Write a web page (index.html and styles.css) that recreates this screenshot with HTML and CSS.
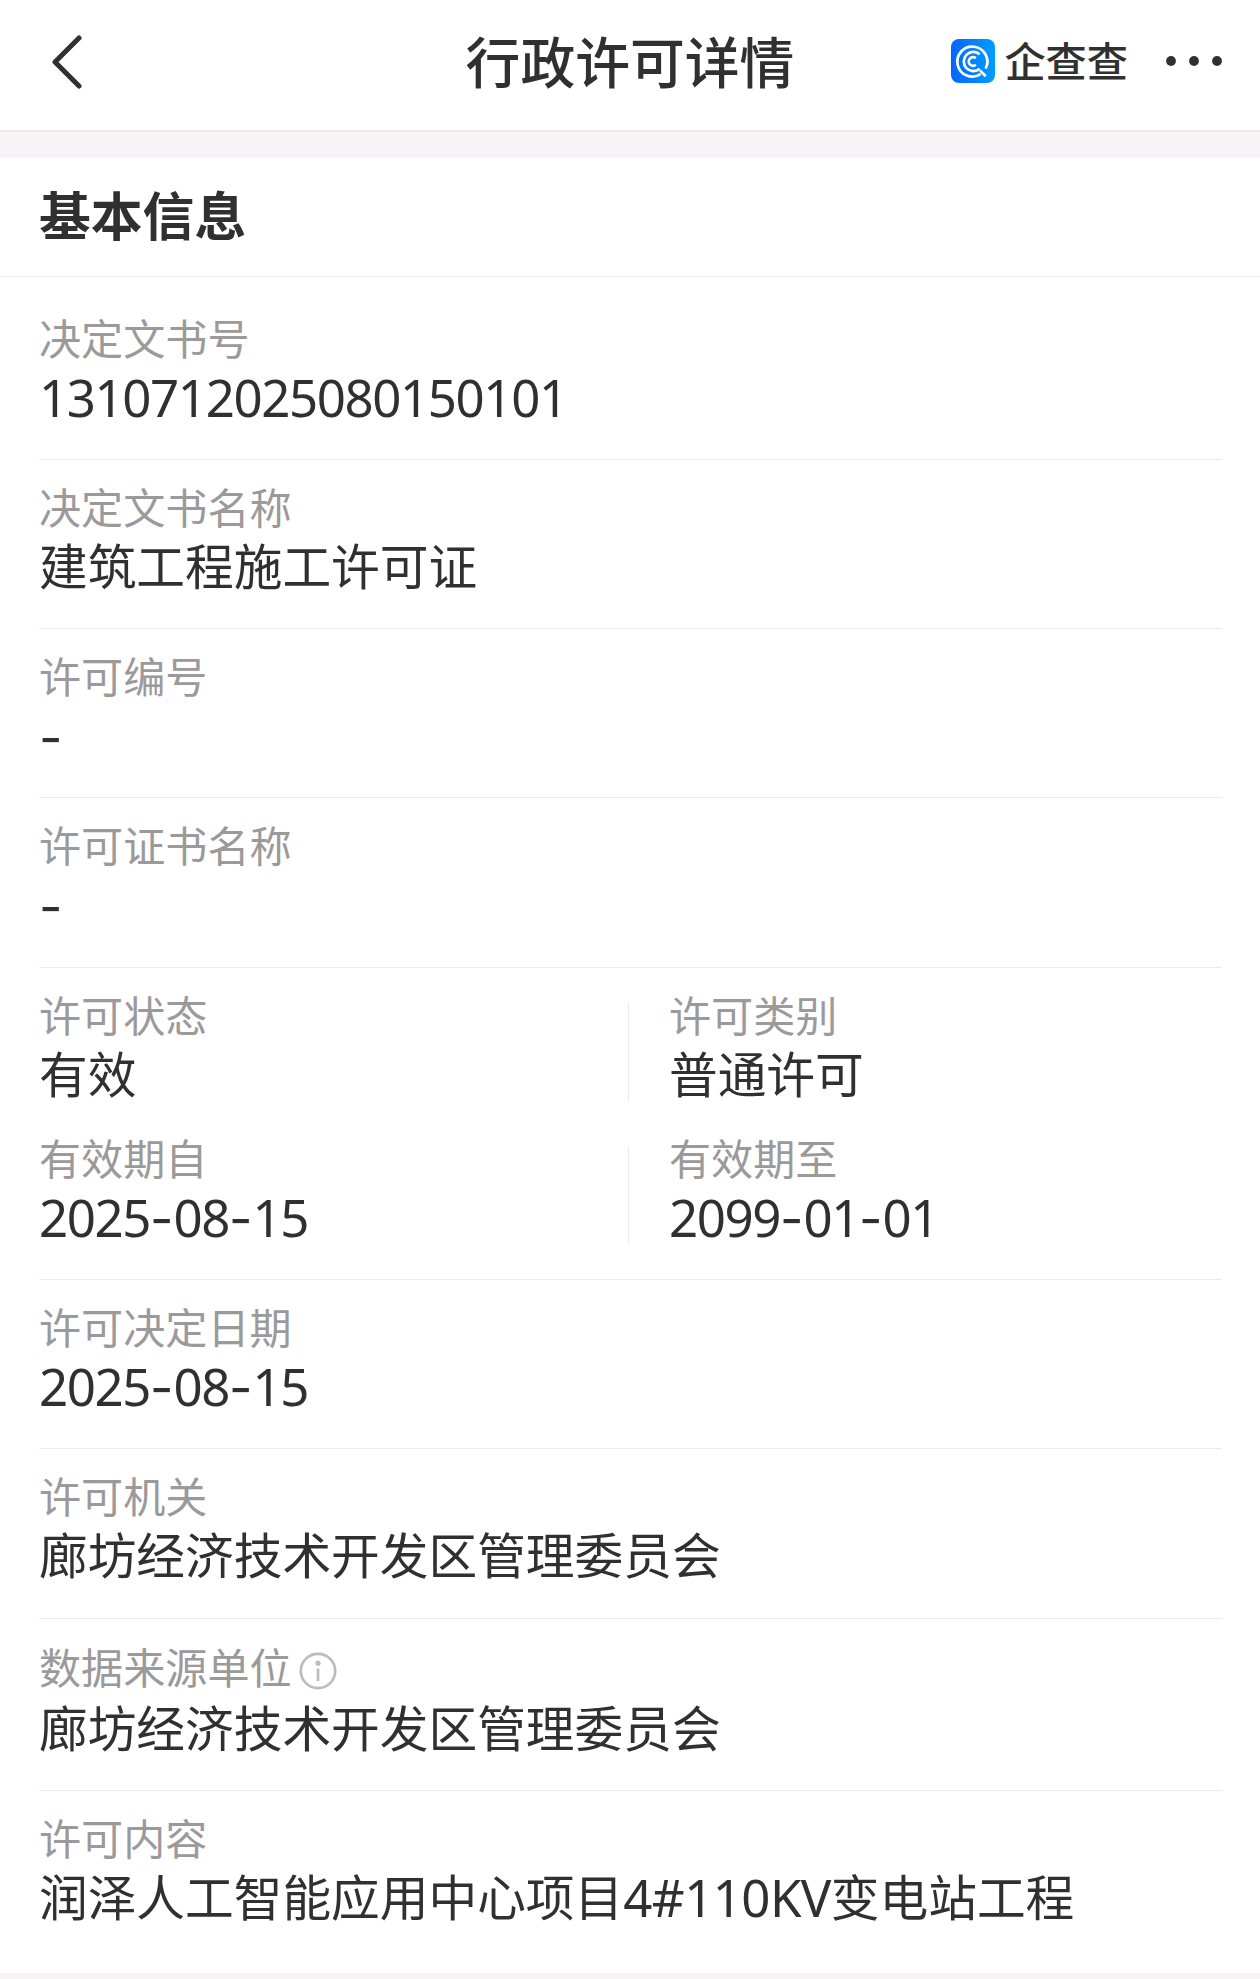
FILE: index.html
```html
<!DOCTYPE html>
<html lang="zh-CN">
  <head>
    <meta charset="utf-8">
    <title>行政许可详情</title>
    <link rel="stylesheet" href="styles.css">
  </head>

  <body>
    <header class="navbar">
      <svg class="back" width="36" height="60" viewBox="0 0 36 60">
        <path d="M33 7 L9 31 L33 55" />
      </svg>
      <h1>行政许可详情</h1>
      <div class="tools">
        <div class="brand">
          <svg class="logo" width="44" height="44" viewBox="0 0 44 44">
            <defs>
              <linearGradient id="blue" x1="0" y1="0" x2="1" y2="0">
                <stop offset="0" stop-color="#0765ff" />
                <stop offset="1" stop-color="#009dff" />
              </linearGradient>
            </defs>
            <rect width="44" height="44" rx="8" fill="url(#blue)" />
            <g fill="none" stroke="#fff" stroke-width="2.7">
              <path d="M29.5 35.2 A15 15 0 1 1 34.6 29.6 M29 31.5 L34.8 37.2" />
              <path d="M28.6 15.2 A9.6 9.6 0 1 0 28.6 29.8" />
              <path d="M24.8 19.2 A4.3 4.3 0 1 0 24.8 25.8" />
            </g>
          </svg>
          <span class="brand-name">企查查</span>
        </div>
        <svg class="more" width="56" height="12" viewBox="0 0 56 12">
          <circle cx="5" cy="6" r="4.9" />
          <circle cx="28" cy="6" r="4.9" />
          <circle cx="51" cy="6" r="4.9" />
        </svg>
      </div>
    </header>

    <section class="card">
      <h2>基本信息</h2>
      <dl class="list">
        <div class="row first">
          <dt>决定文书号</dt>
          <dd><span class="num">1310712025080150101</span></dd>
        </div>
        <div class="row">
          <dt>决定文书名称</dt>
          <dd>建筑工程施工许可证</dd>
        </div>
        <div class="row">
          <dt>许可编号</dt>
          <dd><span class="dash">-</span></dd>
        </div>
        <div class="row loose">
          <dt>许可证书名称</dt>
          <dd><span class="dash">-</span></dd>
        </div>
        <div class="row grid">
          <div class="cell">
            <dt>许可状态</dt>
            <dd>有效</dd>
          </div>
          <div class="cell right">
            <dt>许可类别</dt>
            <dd>普通许可</dd>
          </div>
          <div class="cell">
            <dt>有效期自</dt>
            <dd><span class="num">2025<span class="dash">-</span>08<span class="dash">-</span>15</span></dd>
          </div>
          <div class="cell right">
            <dt>有效期至</dt>
            <dd><span class="num">2099<span class="dash">-</span>01<span class="dash">-</span>01</span></dd>
          </div>
        </div>
        <div class="row">
          <dt>许可决定日期</dt>
          <dd><span class="num">2025<span class="dash">-</span>08<span class="dash">-</span>15</span></dd>
        </div>
        <div class="row loose">
          <dt>许可机关</dt>
          <dd>廊坊经济技术开发区管理委员会</dd>
        </div>
        <div class="row source">
          <dt>
            数据来源单位
            <svg class="info" width="38" height="38" viewBox="0 0 38 38">
              <circle cx="19" cy="19" r="17.2" />
              <path d="M19 16.5 V29" />
              <circle class="dot" cx="19" cy="11.2" r="2.6" />
            </svg>
          </dt>
          <dd>廊坊经济技术开发区管理委员会</dd>
        </div>
        <div class="row last">
          <dt>许可内容</dt>
          <dd>润泽人工智能应用中心项目<span class="num mixed">4#110KV</span>变电站工程</dd>
        </div>
      </dl>
    </section>
  </body>
</html>
```

FILE: styles.css
```css
* {
  box-sizing: border-box;
}
body {
  margin: 0;
  height: 1979px;
  overflow: hidden;
  background: #f7f3f7;
  color: #303030;
  font-family: "Noto Sans CJK SC", sans-serif;
}
h1,
h2,
dl,
dd {
  margin: 0;
}

.navbar {
  display: grid;
  grid-template-columns: 1fr auto 1fr;
  align-items: center;
  height: 132px;
  padding: 0 38px 8px 46px;
  background: #fff;
  border-bottom: 2px solid #ebebec;
}
.navbar h1 {
  padding: 0 8px 5px 0;
  font-size: 54.8px;
  font-weight: 500;
  line-height: 80px;
}
.back {
  fill: none;
  stroke: #303030;
  stroke-width: 5;
  stroke-linecap: round;
  stroke-linejoin: round;
}
.tools {
  display: flex;
  align-items: center;
  justify-content: flex-end;
  gap: 38px;
}
.brand {
  display: flex;
  align-items: center;
  gap: 9px;
  height: 44px;
}
.brand-name {
  padding-bottom: 5px;
  font-size: 41.2px;
  font-weight: 500;
  line-height: 44px;
  white-space: nowrap;
}
.more {
  fill: #303030;
}

.card {
  margin-top: 26px;
  background: #fff;
}
.card h2 {
  height: 119px;
  padding-left: 39px;
  font-size: 51.8px;
  font-weight: 700;
  line-height: 112px;
  border-bottom: 1px solid #ebebeb;
}
.list {
  padding: 0 38px 0 39px;
}
.row {
  padding: 19px 0 33px;
  border-bottom: 1px solid #ebebeb;
}
.row.first {
  padding-top: 33px;
}
.row.loose {
  padding-bottom: 34px;
}
.row.source {
  padding-top: 20px;
}
.row.source dd {
  height: 60px;
  padding-top: 2px;
}
.row.last {
  padding-bottom: 47px;
  border-bottom: 0;
}
dt {
  display: flex;
  align-items: center;
  height: 58px;
  padding-bottom: 4px;
  color: #9b999a;
  font-size: 42.1px;
  line-height: 54px;
}
dd {
  height: 58px;
  font-size: 48.7px;
  line-height: 54px;
  white-space: nowrap;
}

.grid {
  display: grid;
  grid-template-columns: 589px 1fr;
  row-gap: 27px;
}
.cell.right {
  padding-left: 41px;
  background: linear-gradient(#ebebeb, #ebebeb) no-repeat 0 16px / 1px 98px;
}

.num {
  font-family: "Noto Sans", "Noto Sans CJK SC", sans-serif;
  font-size: 51px;
  line-height: 1;
  letter-spacing: -1.4px;
  vertical-align: -1px;
}
.num.mixed {
  letter-spacing: -0.6px;
}
.dash {
  font-family: Inter, sans-serif;
  font-size: 51px;
  line-height: 1;
  letter-spacing: 0;
}
dd > .dash {
  vertical-align: -2px;
}
.info {
  margin: 9px 0 0 7px;
  fill: none;
  stroke: #bdbcbd;
  stroke-width: 2.7;
}
.info .dot {
  fill: #bdbcbd;
  stroke: none;
}
```
